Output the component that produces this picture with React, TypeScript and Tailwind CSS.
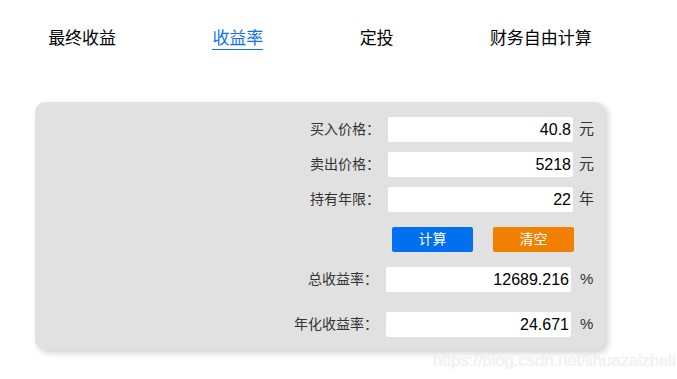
import React from "react";

const tabs = ["最终收益", "收益率", "定投", "财务自由计算"];

const font = { fontFamily: '"Liberation Sans", Arial, "Noto Sans CJK SC", sans-serif' };

function Field({ label, value, unit, result }: { label: string; value: string; unit: string; result?: boolean }) {
    return (
        <div className="flex items-center h-[25px]">
            <div className={`${result ? "w-[343px]" : "w-[345px]"} text-right text-[14px] text-[#333]`}>{label}</div>
            <div className="ml-[8px] w-[185px] h-[25px] bg-white rounded-[2px] flex items-center justify-end pr-[2px] text-[16px] text-black">
                {value}
            </div>
            <div className={`${result ? "ml-[9px]" : "ml-[6px]"} text-[15px] text-[#333]`}>{unit}</div>
        </div>
    );
}

export default function App() {
    return (
        <div className="relative w-[677px] h-[379px] bg-white overflow-hidden" style={font}>
            <div className="w-[640px] h-[51px] pt-[28px] flex justify-around items-start text-[17px] leading-[22px] text-black">
                {tabs.map((t, i) => (
                    <div
                        key={t}
                        className={i === 1 ? "text-[#1670f0] border-b-[1.5px] border-[#1670f0] leading-[21px]" : ""}
                    >
                        {t}
                    </div>
                ))}
            </div>

            <div className="ml-[35px] mt-[51px] w-[570px] h-[248px] bg-[#e1e1e1] rounded-[10px] shadow-[3px_3px_6px_rgba(0,0,0,0.18)] pt-[15px] flex flex-col">
                <div className="flex flex-col gap-[10px]">
                    <Field label="买入价格：" value="40.8" unit="元" />
                    <Field label="卖出价格：" value="5218" unit="元" />
                    <Field label="持有年限：" value="22" unit="年" />
                </div>
                <div className="mt-[15px] ml-[357px] flex gap-[20px]">
                    <button className="w-[81px] h-[25px] bg-[#006ff0] text-white text-[14px] rounded-[2px]">计算</button>
                    <button className="w-[81px] h-[25px] bg-[#f17f00] text-white text-[14px] rounded-[2px]">清空</button>
                </div>
                <div className="mt-[15px]">
                    <Field label="总收益率：" value="12689.216" unit="%" result />
                </div>
                <div className="mt-[20px]">
                    <Field label="年化收益率：" value="24.671" unit="%" result />
                </div>
            </div>

            <div className="absolute left-[433px] top-[348px] text-[17px] text-[#f4f4f4] [text-shadow:0_0_1px_rgba(0,0,0,0.12)] tracking-[-0.2px]">
                https://blog.csdn.net/lihuazaizheli
            </div>
        </div>
    );
}
